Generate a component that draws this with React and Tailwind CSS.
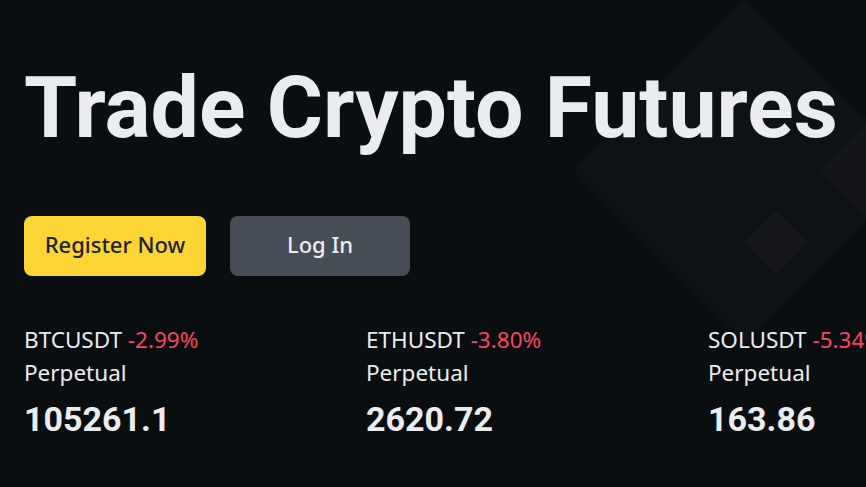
import React from "react";

const tickers = [
  { symbol: "BTCUSDT", change: "-2.99%", price: "105261.1" },
  { symbol: "ETHUSDT", change: "-3.80%", price: "2620.72" },
  { symbol: "SOLUSDT", change: "-5.34%", price: "163.86" },
];

function BackdropMark() {
  // faint rotated squares sitting behind the hero copy
  return (
    <svg
      className="absolute left-0 top-0 pointer-events-none"
      width="866"
      height="487"
      viewBox="0 0 866 487"
      fill="none"
    >
      <polygon points="745,-2 917,170 745,342 573,170" fill="#0e1115" />
      <polygon points="866,123 819,170 866,217 913,170" fill="#131519" />
      <polygon points="776,210 808,242 776,274 744,242" fill="#14161a" />
    </svg>
  );
}

export default function App() {
  return (
    <div className="relative w-[866px] h-[487px] overflow-hidden bg-[#0b0e11]">
      <BackdropMark />
      <div className="relative pl-6 pt-[60px]">
        <h1 className="font-['Roboto',sans-serif] text-[86px] leading-[96px] font-bold text-[#eaecef] whitespace-nowrap">
          Trade Crypto Futures
        </h1>
        <div className="mt-[60px] flex gap-6">
          <button className="w-[182px] h-[60px] pb-[3px] rounded-lg bg-[#fcd535] text-[#1e2329] text-[22px] font-medium font-['Noto_Sans',sans-serif]">
            Register Now
          </button>
          <button className="w-[180px] h-[60px] pb-[3px] rounded-lg bg-[#474d57] text-[#eaecef] text-[22px] font-medium font-['Noto_Sans',sans-serif]">
            Log In
          </button>
        </div>
        <div className="mt-[49px] flex">
          {tickers.map((t) => (
            <div key={t.symbol} className="w-[342px] shrink-0">
              <div className="font-['Noto_Sans',sans-serif] text-[22.5px] leading-[30px] text-[#eaecef] whitespace-nowrap">
                {t.symbol} <span className="text-[#f6465d]">{t.change}</span>
              </div>
              <div className="font-['Noto_Sans',sans-serif] text-[22.5px] leading-[36px] text-[#eaecef]">Perpetual</div>
              <div className="mt-[8px] font-['Roboto',sans-serif] text-[34px] leading-[40px] font-bold text-[#eaecef]">{t.price}</div>
            </div>
          ))}
        </div>
      </div>
    </div>
  );
}
